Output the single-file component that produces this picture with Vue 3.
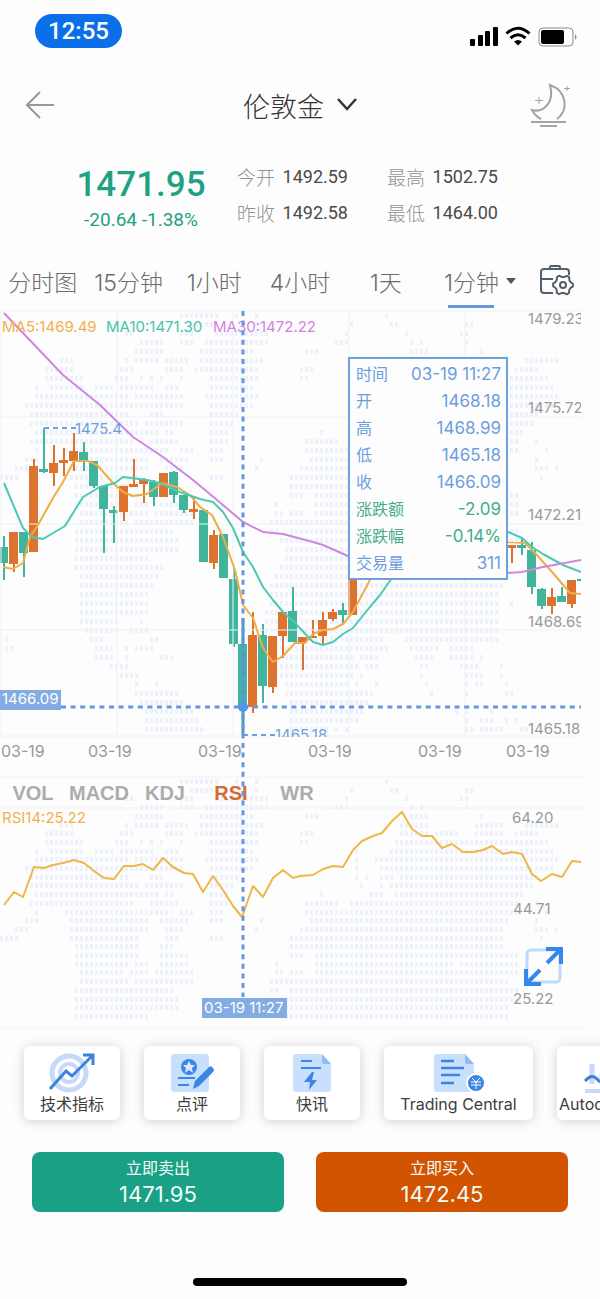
<template>
  <main class="screen">
    <header class="status">
      <span class="clock">12:55</span>
      <svg class="signals" viewBox="0 0 108 22" aria-hidden="true">
        <rect x="0" y="13" width="5" height="7" rx="1" />
        <rect x="8" y="9" width="5" height="11" rx="1" />
        <rect x="15" y="5" width="5" height="15" rx="1" />
        <rect x="23" y="1" width="5" height="19" rx="1" />
        <g fill="none" stroke="#000" stroke-width="3">
          <path d="M36.500 7.500Q48 -3 59.500 7.500" />
          <path d="M40.500 12Q48 5.500 55.500 12" />
        </g>
        <path d="M44 15.500Q48 12.500 52 15.500L48 19.500Z" />
        <rect x="69" y="2" width="34" height="18" rx="4" fill="none" stroke="#8c8c8c" />
        <rect x="71" y="4" width="23" height="14" rx="2" />
        <path d="M105 8Q108 11 105 14Z" fill="#8c8c8c" />
      </svg>
    </header>

    <nav class="nav">
      <button class="icon-btn" aria-label="返回">
        <svg width="30" height="32" viewBox="0 0 30 32" fill="none" stroke="#989898" stroke-width="2">
          <path d="M15 3L2 16L15 29M2 16H29" />
        </svg>
      </button>
      <button class="symbol">
        伦敦金
        <svg width="22" height="16" viewBox="0 0 22 16" fill="none" stroke="#333" stroke-width="2.500">
          <path d="M2 2L11 12L20 2" />
        </svg>
      </button>
      <button class="icon-btn" aria-label="夜间模式">
        <svg width="40" height="46" viewBox="0 0 40 46" fill="none" stroke="#a3a3a3" stroke-width="2">
          <path d="M11 37C7 35 4 32 2 28C13 31 25 21 20 3C37 9 39 28 27 37" />
          <path d="M1 40H36M10 44H27" />
          <path d="M9 15V22M5 18.500H13M37 4V9M34 6.500H40" stroke-width="1" />
        </svg>
      </button>
    </nav>

    <section class="quote">
      <div class="last">
        <strong>1471.95</strong>
        <span>-20.64 -1.38%</span>
      </div>
      <dl class="stats">
        <div v-for="s in stats" :key="s.label">
          <dt>{{ s.label }}</dt>
          <dd>{{ s.value }}</dd>
        </div>
      </dl>
    </section>

    <div class="periods">
      <button
        v-for="p in periods"
        :key="p"
        :class="{ active: p === period }"
        @click="period = p"
      >
        {{ p }}
        <i v-if="p === '1分钟'" class="caret"></i>
      </button>
      <button aria-label="设置">
        <svg width="36" height="34" viewBox="0 0 36 34" fill="none" stroke="#53606b" stroke-width="2">
          <path d="M11 5V3Q11 2 12 2H20Q21 2 21 3V5" />
          <path d="M14 29H5Q2 29 2 26V8Q2 5 5 5H27Q30 5 30 8V11M2 15H14" />
          <path :d="gear" stroke-linejoin="round" />
          <circle cx="24" cy="21" r="3" />
        </svg>
      </button>
    </div>

    <section class="charts">
      <svg class="plot" viewBox="0 310 600 718">
        <defs>
          <clipPath id="plot-area"><rect x="0" y="310" width="581" height="427" /></clipPath>
          <clipPath id="map-area"><rect x="0" y="778" width="581" height="241" /></clipPath>
        </defs>
        <path class="map" :d="priceMap" clip-path="url(#plot-area)" />
        <path class="map" :d="rsiMap" clip-path="url(#map-area)" />

        <g clip-path="url(#plot-area)">
          <g v-for="c in candles" :key="c[0]" :class="c[5] ? 'up' : 'down'">
            <rect :x="c[0] - 1" :y="c[1]" width="2" :height="c[4] - c[1]" />
            <rect :x="c[0] - 5" :y="c[2]" width="9" :height="c[3] - c[2]" />
          </g>
          <path class="grid" d="M0 311H581M0 417H581M0 524H581M0 630H581M0 736H581M1 311V736M117 311V736M233 311V736M349 311V736M465 311V736" />
          <polyline v-for="l in lines" :key="l.points" class="line" :stroke="l.color" :points="l.points" />
        </g>
        <path class="grid" d="M0 777H584M0 808H584M0 1028H584" />
        <polyline class="line" stroke="#efb64c" :points="rsi" />

        <g class="legend">
          <text x="2" y="332" fill="#f2b04c">MA5:1469.49</text>
          <text x="106" y="332" fill="#45c4ae">MA10:1471.30</text>
          <text x="213" y="332" fill="#d283e2">MA30:1472.22</text>
          <text x="2" y="823" fill="#f2b04c">RSI14:25.22</text>
        </g>
        <g clip-path="url(#plot-area)">
          <g class="axis">
            <text v-for="t in priceTicks" :key="t.v" x="528" :y="t.y">{{ t.v }}</text>
          </g>
          <g class="marks">
            <path d="M44 428H76M243 735H275" />
            <text x="75" y="434">1475.4</text>
            <text x="275" y="740">1465.18</text>
          </g>
        </g>
        <g class="axis">
          <text x="512" y="823">64.20</text>
          <text x="513" y="914">44.71</text>
          <text x="513" y="1004">25.22</text>
        </g>
        <g class="axis dates">
          <text v-for="x in dates" :key="x" :x="x" y="757">03-19</text>
        </g>
      </svg>

      <div class="indicators">
        <button
          v-for="n in indicators"
          :key="n"
          :class="{ active: n === indicator }"
          @click="indicator = n"
        >
          {{ n }}
        </button>
      </div>

      <svg class="crosshair" viewBox="0 310 600 718">
        <path d="M243 618V735" class="stem" />
        <path d="M243 311V997M61 707H581" class="dash" />
        <circle cx="243" cy="707" r="5" fill="#4e96ee" />
        <rect x="0" y="690" width="61" height="20" />
        <text x="2" y="704">1466.09</text>
        <rect x="202" y="998" width="85" height="20" />
        <text x="204" y="1013">03-19 11:27</text>
      </svg>

      <table class="tip">
        <tbody>
          <tr v-for="r in tip" :key="r[0]" :class="{ fall: r[2] }">
            <th scope="row">{{ r[0] }}</th>
            <td>{{ r[1] }}</td>
          </tr>
        </tbody>
      </table>

      <button class="expand" aria-label="全屏">
        <svg viewBox="0 0 40 40" fill="none">
          <rect x="3" y="4" width="33" height="32" rx="4" stroke="#bfdaff" stroke-width="3" />
          <path
            d="M22 3H37V18M36 4L23 17M2 23V38H17M3 37L16 24"
            stroke="#3488ee"
            stroke-width="4"
          />
        </svg>
      </button>
    </section>

    <div class="cards">
      <button class="card">
        <svg width="46" height="40" viewBox="0 0 46 40" fill="none">
          <circle cx="20" cy="20" r="17" stroke="#c6d9fb" stroke-width="5" />
          <circle cx="20" cy="20" r="9" stroke="#c6d9fb" stroke-width="4" />
          <path d="M1 36L17 18L23 23L43 3M34 2H44V12" stroke="#3c82d8" stroke-width="3" />
        </svg>
        <span>技术指标</span>
      </button>
      <button class="card">
        <svg width="46" height="40" viewBox="0 0 46 40">
          <rect x="2" y="1" width="38" height="38" rx="3" fill="#c9e0fc" />
          <circle cx="20" cy="14" r="8" fill="#3c85e4" />
          <path d="M20 8L22 12L26 12L23 15L24 20L20 17L16 20L17 15L14 12L18 12Z" fill="#d9eaff" />
          <path d="M9 25H26M9 32H20" stroke="#3c85e4" stroke-width="2" />
          <path d="M24 36L26 28L40 14Q42 12 44 15Q46 17 44 19L30 33Z" fill="#3c85e4" />
        </svg>
        <span>点评</span>
      </button>
      <button class="card">
        <svg width="46" height="40" viewBox="0 0 46 40">
          <path d="M6 1H32L42 11V36Q42 39 39 39H7Q4 39 4 36V4Q4 1 7 1Z" fill="#c9e0fc" />
          <path d="M33 1L42 11H35Q33 11 33 9Z" fill="#8fbcf6" />
          <path d="M12 8H23M12 15H32" stroke="#3c85e4" stroke-width="2" />
          <path d="M23 19L15 29H21L20 37L28 27H23L25 19Z" fill="#3c85e4" />
        </svg>
        <span>快讯</span>
      </button>
      <button class="card wide">
        <svg width="52" height="40" viewBox="0 0 52 40">
          <path d="M4 1H32L41 11V39H4Q1 39 1 36V4Q1 1 4 1Z" fill="#c9e0fc" />
          <path d="M32 1L41 11H34Q32 11 32 9Z" fill="#8fbcf6" />
          <path d="M8 8H21M8 15H31M8 22H27M8 30H21" stroke="#3c85e4" stroke-width="2.500" />
          <circle cx="43" cy="30" r="9" fill="#3c85e4" stroke="#fff" stroke-width="2" />
          <path d="M39 25L43 29L47 25M38 29H48M38 32H48M43 29V36" fill="none" stroke="#fff" stroke-width="1" />
        </svg>
        <span>Trading Central</span>
      </button>
      <button class="card">
        <svg width="46" height="40" viewBox="0 0 46 40" fill="none">
          <path d="M10 11V31M20 20V31M30 6V31" stroke="#c6d9fb" stroke-width="5" />
          <path d="M3 38H43" stroke="#c6d9fb" stroke-width="4" />
          <path d="M3 28Q10 20 15 26T26 24T43 14" stroke="#3c82d8" stroke-width="3" />
        </svg>
        <span>Autochartist</span>
      </button>
    </div>

    <div class="trade">
      <button class="sell"><span>立即卖出</span><b>1471.95</b></button>
      <button class="buy"><span>立即买入</span><b>1472.45</b></button>
    </div>
    <div class="home-bar"></div>
  </main>
</template>

<script setup>
import { ref } from "vue";

const stats = [
  { label: "今开", value: "1492.59" },
  { label: "最高", value: "1502.75" },
  { label: "昨收", value: "1492.58" },
  { label: "最低", value: "1464.00" },
];

const periods = ["分时图", "15分钟", "1小时", "4小时", "1天", "1分钟"];
const period = ref("1分钟");

const indicators = ["VOL", "MACD", "KDJ", "RSI", "WR"];
const indicator = ref("RSI");

// label, value, falling
const tip = [
  ["时间", "03-19 11:27"],
  ["开", "1468.18"],
  ["高", "1468.99"],
  ["低", "1465.18"],
  ["收", "1466.09"],
  ["涨跌额", "-2.09", true],
  ["涨跌幅", "-0.14%", true],
  ["交易量", "311"],
];

const priceTicks = [
  { v: "1479.23", y: 324 },
  { v: "1475.72", y: 413 },
  { v: "1472.21", y: 520 },
  { v: "1468.69", y: 627 },
  { v: "1465.18", y: 734 },
];
const dates = [1, 88, 198, 308, 418, 506];

// x, high, body top, body bottom, low, rising
const candles = [
  [4, 536, 547, 563, 580, 0],
  [14, 532, 532, 564, 572, 1],
  [24, 532, 532, 553, 577, 0],
  [34, 459, 466, 552, 552, 1],
  [44, 428, 469, 472, 473, 0],
  [54, 445, 463, 473, 486, 1],
  [64, 448, 460, 463, 476, 1],
  [74, 433, 451, 461, 471, 1],
  [84, 442, 452, 461, 471, 0],
  [94, 461, 461, 486, 488, 0],
  [104, 486, 486, 509, 553, 0],
  [114, 506, 510, 513, 543, 0],
  [124, 486, 486, 512, 521, 1],
  [134, 459, 484, 487, 487, 1],
  [144, 478, 480, 484, 503, 1],
  [154, 480, 482, 497, 506, 0],
  [164, 473, 473, 497, 497, 1],
  [174, 471, 472, 495, 503, 0],
  [184, 495, 495, 510, 513, 0],
  [194, 497, 509, 512, 519, 1],
  [204, 510, 510, 562, 562, 0],
  [214, 530, 535, 563, 569, 1],
  [224, 534, 534, 578, 578, 0],
  [234, 567, 579, 644, 647, 0],
  [243, 618, 644, 707, 735, 0],
  [253, 612, 635, 707, 713, 1],
  [263, 624, 635, 686, 703, 0],
  [273, 636, 636, 687, 693, 1],
  [283, 612, 612, 636, 658, 1],
  [293, 587, 611, 642, 642, 0],
  [303, 637, 637, 643, 670, 1],
  [313, 620, 636, 638, 638, 1],
  [323, 612, 620, 636, 645, 1],
  [333, 609, 612, 619, 621, 1],
  [343, 603, 610, 615, 624, 0],
  [353, 575, 575, 615, 615, 1],
  [512, 545, 545, 548, 563, 1],
  [522, 537, 545, 548, 555, 0],
  [532, 542, 550, 587, 594, 0],
  [542, 588, 589, 606, 609, 0],
  [552, 588, 597, 606, 614, 1],
  [562, 587, 596, 602, 602, 0],
  [572, 580, 580, 604, 608, 1],
  [582, 579, 579, 581, 581, 0],
];

const lines = [
  {
    color: "#f0ac45",
    points:
      "3,567 13,569 23,563 30,537 38,525 53,498 63,482 74,461 88,461 97,465 113,483 123,492 133,496 147,494 162,483 177,487 190,495 200,507 212,515 223,537 235,570 243,605 253,618 263,648 273,662 283,656 295,643 305,643 313,634 323,630 333,629 343,624 353,612 370,580 410,530 508,542 525,543 535,553 553,573 570,593 581,594",
  },
  {
    color: "#4bc9b3",
    points:
      "4,483 23,528 32,537 43,539 65,526 83,497 100,487 115,483 123,477 147,480 160,483 180,492 200,499 213,502 223,512 233,528 243,552 253,567 263,587 273,600 283,612 295,623 313,642 323,645 333,642 343,634 353,628 365,613 380,595 392,578 440,520 508,532 522,538 532,547 543,554 563,565 581,572",
  },
  {
    color: "#cf86e0",
    points:
      "4,313 63,375 100,405 133,437 163,457 193,480 217,500 243,522 263,532 283,534 313,542 323,545 348,556 420,573 508,573 522,572 543,567 581,560",
  },
];

const rsi =
  "4,905 14,892 23,897 34,867 44,868 53,865 63,863 74,860 84,863 94,871 104,878 114,879 124,866 134,866 143,864 153,870 163,858 173,867 184,873 193,874 203,892 213,876 223,890 233,906 242,917 253,886 263,897 273,878 283,870 293,878 300,876 313,875 323,869 333,866 343,867 353,850 362,841 373,836 382,833 392,821 402,812 412,829 422,836 432,836 442,848 452,844 463,852 473,852 483,850 492,846 503,854 512,852 522,854 532,874 541,881 552,874 562,877 572,861 581,862";

// Dotted world map: one entry per row, each a list of from-to x ranges
const mapRows = [
  "180-216 234-235 254-255 385-386",
  "190-212 254-255 350-352 390-395 463-464 471-472",
  "125-130 180-190 215-265 346-347 405-406 458-463",
  "138-158 180-190 205-265 336-346 410-411 418-419 466-467",
  "137-160 200-250 306-314 408-426 481-482",
  "60-68 123-124 137-157 165-185 200-258 400-423 473-500 525-555",
  "45-70 118-130 165-180 195-255 300-308 400-423 436-453 476-500 513-533",
  "45-80 113-124 140-141 150-151 160-161 178-179 210-255 301-306 396-546",
  "36-37 50-80 97-108 120-150 165-175 210-250 355-356 388-389 396-550",
  "36-108 115-125 135-180 207-253 355-356 375-376 381-553",
  "27-133 140-180 210-250 355-356 380-550",
  "32-123 150-160 210-235 355-356 366-367 380-390 400-533",
  "30-137 145-180 210-230 361-362 380-381 390-530",
  "33-155 165-170 210-225 320-321 370-380 393-520",
  "30-130 150-176 210-225 305-335 350-513 535-536",
  "36-37 63-110 117-167 180-190 210-220 306-336 341-513 546-547",
  "25-33 70-143 160-183 210-218 310-323 330-503 535-536 258-259",
  "15-23 70-147 165-180 253-256 300-500 535-545 553-554",
  "2-13 70-137 165-176 210-218 300-350 357-500 540-541 292-296",
  "73-133 160-170 292-313 320-500",
  "73-137 160-183 290-298 316-513",
  "73-123 137-147 160-183 273-274 316-450 460-513",
  "80-120 130-147 155-190 276-280 288-298 316-513",
  "80-123 137-192 268-285 290-450 456-503",
  "77-170 272-276 290-513",
  "73-173 280-513",
  "77-173 285-505",
  "73-147 285-505",
  "75-160 280-500",
  "80-155 275-500",
  "78-150 270-498",
  "80-145 270-496",
  "80-146 268-493 511-512",
  "80-143 265-493",
  "80-116 138-139 265-493",
  "84-86 90-113 130-143 260-383 388-493",
  "3-4 90-100 152-153 260-350 356-380 403-496",
  "7-8 97-110 126-127 137-150 262-350 355-386 410-433 451-468",
  "97-110 123-124 158-159 167-168 270-348 360-376 413-430 451-470 481-482",
  "108-125 275-353 365-376 418-423 461-473 500-501",
  "122-133 280-348 360-361 420-421 466-478 500-501",
  "133-134 153-154 285-346 355-356 375-376 423-424 463-464 473-478 505-506",
  "137-173 285-371 428-429 463-464 505-511",
  "140-180 288-365",
  "147-192 288-361 456-457 466-467 491-492",
  "143-193 290-355 463-464 481-491 505-506 515-516",
  "143-201 290-326 333-334 346-347 463-470 481-500 520-526",
];

function dots(top, pitch) {
  return mapRows
    .map((row, i) => {
      const y = Math.round(top + i * pitch);
      let d = "";
      for (const range of row.split(" ")) {
        const [from, to] = range.split("-").map(Number);
        for (let x = Math.round(from / 5) * 5; x <= to + 2; x += 5) {
          d += `M${x} ${y}h3v5h-3z`;
        }
      }
      return d;
    })
    .join("");
}
const priceMap = dots(313, 9);
const rsiMap = dots(779, 8.7);

// Six-tooth cog around 24,21
const gear = (() => {
  const pts = [];
  for (let i = 0; i < 24; i++) {
    const r = i % 4 < 2 ? 10 : 8;
    const a = ((i * 15 - 7) * Math.PI) / 180;
    pts.push(`${(24 + r * Math.cos(a)).toFixed(1)} ${(21 + r * Math.sin(a)).toFixed(1)}`);
  }
  return `M${pts.join("L")}Z`;
})();
</script>

<style>
body {
  margin: 0;
  background: #fdfdfd;
}
</style>

<style scoped>
.screen {
  overflow: hidden;
  background: #fdfdfd;
  color: #333;
  font-family: Inter, "Noto Sans CJK SC", sans-serif;
}
button {
  padding: 0;
  border: 0;
  background: none;
  color: inherit;
  font: inherit;
  cursor: pointer;
}
svg {
  display: block;
}

.status {
  display: flex;
  align-items: center;
  justify-content: space-between;
  height: 62px;
  padding: 0 22px 0 35px;
}
.clock {
  width: 87px;
  border-radius: 17px;
  background: #0a6fe8;
  color: #fff;
  font: 500 24px/34px Roboto, sans-serif;
  text-align: center;
}
.signals {
  width: 108px;
  margin-top: 12px;
}

.nav {
  display: grid;
  grid-template-columns: 40px 1fr 40px;
  align-items: center;
  height: 86px;
  padding: 0 30px 2px 25px;
}
.icon-btn {
  display: flex;
}
.symbol {
  display: flex;
  align-items: center;
  justify-content: center;
  gap: 12px;
  padding-left: 6px;
  font-size: 27px;
  font-weight: 300;
}

.quote {
  display: flex;
  gap: 33px;
  height: 104px;
  padding: 8px 0 0 78px;
  box-sizing: border-box;
}
.last {
  display: flex;
  flex-direction: column;
  align-items: center;
  width: 126px;
  padding-top: 2px;
  color: #1fa184;
  font-family: Roboto, sans-serif;
  white-space: nowrap;
}
.last strong {
  font-size: 35px;
  font-weight: 500;
  line-height: 50px;
}
.last span {
  font-size: 19px;
  line-height: 20px;
}
.stats {
  display: grid;
  grid-template-columns: 111px 111px;
  grid-auto-rows: 36px;
  column-gap: 39px;
  margin: 0;
}
.stats div {
  display: flex;
  align-items: center;
  justify-content: space-between;
}
.stats dt {
  color: #929292;
  font-size: 19px;
  font-weight: 300;
}
.stats dd {
  margin: 0;
  color: #4a4a4a;
  font: 18px Roboto, sans-serif;
}

.periods {
  display: grid;
  grid-template-columns: repeat(7, 1fr);
  height: 56px;
  color: #6b6b6b;
  font-size: 23px;
  font-weight: 300;
}
.periods button {
  position: relative;
  display: flex;
  align-items: center;
  justify-content: center;
  padding-bottom: 2px;
  white-space: nowrap;
}
.periods .active::after {
  content: "";
  position: absolute;
  bottom: 2px;
  width: 46px;
  height: 3px;
  background: #6797dc;
}
.caret {
  position: absolute;
  right: -2px;
  border: 5px solid transparent;
  border-top: 6px solid #555;
  border-bottom: 0;
}

.charts {
  position: relative;
}
.plot,
.crosshair {
  width: 100%;
  height: auto;
}
.map {
  fill: #ecf1fc;
}
.up {
  fill: #dc7430;
}
.down {
  fill: #41b59b;
}
.grid {
  fill: none;
  stroke: #f0f1f5;
}
.line {
  fill: none;
  stroke-width: 2;
  stroke-linejoin: round;
}
.legend {
  font-size: 15px;
}
.axis {
  fill: #999;
  font-size: 15px;
}
.axis.dates {
  font-size: 16px;
}
.marks {
  fill: #6c9fe0;
  font-size: 15px;
}
.marks path {
  fill: none;
  stroke: #6c9fe0;
  stroke-width: 2;
  stroke-dasharray: 5 4;
}
.crosshair {
  position: absolute;
  inset: 0;
  pointer-events: none;
  fill: #82ace2;
}
.crosshair text {
  fill: #fff;
  font-size: 15px;
}
.stem {
  stroke: #479cc4;
  stroke-width: 3;
}
.dash {
  fill: none;
  stroke: #6796de;
  stroke-width: 3;
  stroke-dasharray: 5 4.6;
}

.indicators {
  position: absolute;
  top: 65%;
  left: 0;
  display: grid;
  grid-template-columns: repeat(5, 1fr);
  width: 55%;
  height: 34px;
  color: #acacac;
  font: bold 20px "Liberation Sans", sans-serif;
}
.indicators .active {
  color: #d76a2e;
}

.tip {
  position: absolute;
  top: 47px;
  left: 58%;
  width: 160px;
  padding: 2px 5px 1px 6px;
  box-sizing: border-box;
  border: 2px solid #6ca0df;
  border-spacing: 0;
  background: #fdfdfd;
  color: #6d9ddf;
  line-height: 27px;
  white-space: nowrap;
}
.tip th,
.tip td {
  height: 27px;
  padding: 0;
  font-weight: 400;
}
.tip th {
  font-size: 16px;
  text-align: left;
}
.tip td {
  font-size: 17px;
  text-align: right;
}
.tip .fall {
  color: #43ab8b;
}

.expand {
  position: absolute;
  right: 36px;
  bottom: 42px;
  width: 40px;
  height: 40px;
}

.cards {
  display: flex;
  gap: 24px;
  padding: 18px 0 32px 24px;
  overflow: hidden;
}
.card {
  display: flex;
  flex: none;
  flex-direction: column;
  align-items: center;
  width: 96px;
  height: 74px;
  padding-top: 7px;
  border-radius: 6px;
  background: #fff;
  box-shadow: 0 1px 12px rgba(0, 0, 0, 0.18);
  color: #3c3c3c;
  font-size: 16px;
  line-height: 22px;
  white-space: nowrap;
}
.wide {
  width: 149px;
}

.trade {
  display: grid;
  grid-template-columns: 1fr 1fr;
  gap: 32px;
  padding: 0 32px;
}
.trade button {
  display: flex;
  flex-direction: column;
  align-items: center;
  height: 60px;
  padding-top: 4px;
  border-radius: 8px;
  color: #f2fbf8;
}
.trade span {
  font-size: 16px;
  line-height: 24px;
}
.trade b {
  font-size: 22px;
  font-weight: 400;
  line-height: 28px;
}
.trade .sell {
  background: #1aa185;
}
.trade .buy {
  background: #d25400;
}
.home-bar {
  width: 214px;
  height: 8px;
  margin: 66px auto 13px;
  border-radius: 4px;
  background: #000;
}
</style>
